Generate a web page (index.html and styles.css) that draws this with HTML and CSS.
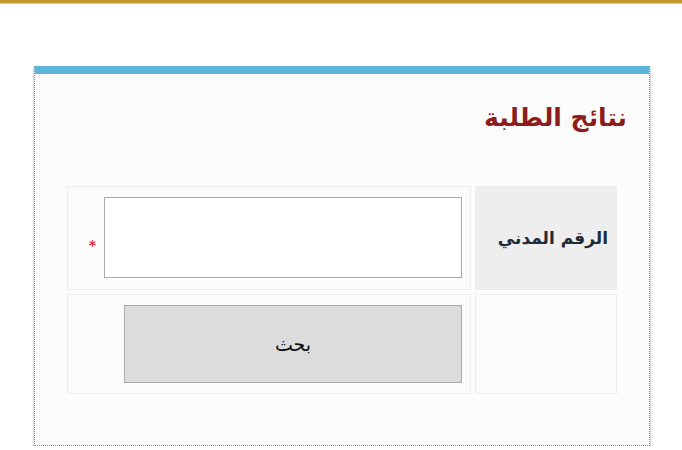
FILE: index.html
```html
<!DOCTYPE html>
<html lang="ar" dir="rtl">
<head>
    <meta charset="UTF-8">
    <meta name="viewport" content="width=device-width, initial-scale=1.0">
    <title>نتائج الطلبة</title>
    <link rel="stylesheet" href="styles.css">
</head>
<body>
    <div class="topBar"></div>
    <div class="card">
        <h2 class="title">نتائج الطلبة</h2>
        <div class="formGrid">
            <div class="labelCell">الرقم المدني</div>
            <div class="fieldCell">
                <input type="text" id="civilId" class="civilField">
                <span class="required">*</span>
            </div>
            <div class="emptyCell"></div>
            <div class="fieldCell">
                <button class="searchBtn">بحث</button>
            </div>
        </div>
    </div>
</body>
</html>
```

FILE: styles.css
```css
body {
    font-family: "DejaVu Sans", sans-serif;
    margin: 0;
    background-color: #fff;
}

.topBar {
    height: 3px;
    background-color: #c39a31;
    border-bottom: 1px solid #e6cf72;
}

.card {
    width: 550px;
    margin: 62px 32px 0 0;
    background-color: #fcfcfc;
    border-top: 8px solid #5bb5d8;
    border-left: 1px dotted #6f9bb3;
    border-right: 1px dotted #6f9bb3;
    border-bottom: 1px dotted #6f9bb3;
    box-shadow: 0 2px 2px rgba(0, 0, 0, 0.45);
    padding: 24px 32px 51px 32px;
}

.title {
    margin: 0 -10px 0 0;
    color: #8c1c1e;
    font-size: 25px;
    font-weight: bold;
    line-height: 40px;
    text-align: right;
}

.formGrid {
    display: grid;
    grid-template-columns: 142px 1fr;
    grid-template-rows: 104px 100px;
    gap: 4px;
    margin-top: 48px;
}

.labelCell {
    background-color: #eeeeee;
    color: #1d2c3b;
    font-size: 17px;
    font-weight: bold;
    display: flex;
    align-items: center;
    padding-right: 9px;
}

.fieldCell, .emptyCell {
    border: 1px solid #eeeeee;
    background-color: #fbfbfb;
}

.fieldCell {
    display: flex;
    align-items: flex-start;
    padding: 10px 8px 0 0;
}

.civilField {
    width: 358px;
    height: 81px;
    box-sizing: border-box;
    border: 1px solid #aaa;
    background-color: #fff;
    margin: 0;
}

.required {
    color: #e03030;
    font-size: 14px;
    font-weight: bold;
    margin: 40px 8px 0 0;
}

.searchBtn {
    width: 338px;
    height: 78px;
    background-color: #dcdcdc;
    border: 1px solid #aaa;
    font-family: "DejaVu Sans", sans-serif;
    font-size: 19px;
    color: #111;
    margin: 0;
    padding: 0;
}
```
